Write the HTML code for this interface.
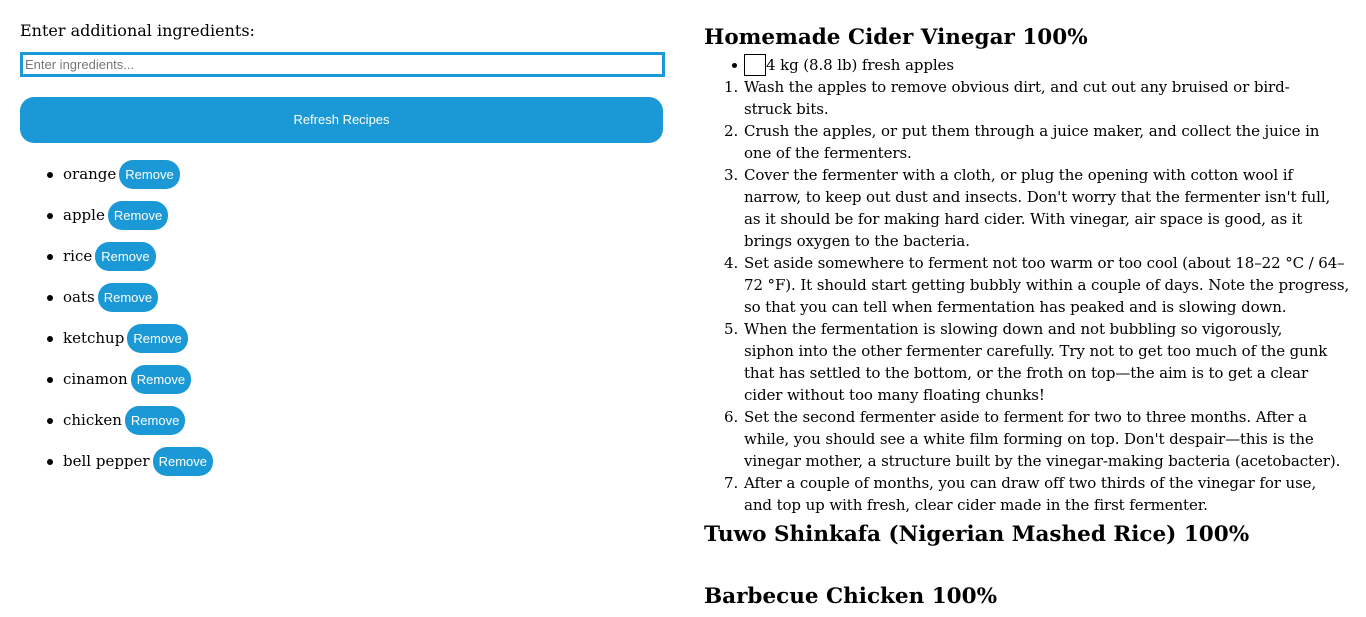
<!DOCTYPE html>
<html><head><style>
body{margin:0;width:1366px;height:617px;overflow:hidden;background:#fff;font-family:"DejaVu Serif","Liberation Serif",serif;color:#000;font-size:15px;}
.left{position:absolute;left:20px;top:0;width:643px;}
.lbl{position:absolute;top:21px;left:0;font-size:16px;white-space:nowrap}
.inp{position:absolute;top:52px;left:0;width:637px;height:19px;border:3px solid #1a99d6;font-family:"Liberation Sans",sans-serif;font-size:13px;color:#777;line-height:19px;padding-left:2px}
.btn{position:absolute;top:97px;left:0;width:643px;height:46px;border-radius:14px;background:#1a99d6;color:#fff;font-family:"Liberation Sans",sans-serif;font-size:13px;text-align:center;line-height:46px}
.item{position:absolute;left:43px;height:30px;line-height:30px;white-space:nowrap}
.item::before{content:"";position:absolute;left:-16px;top:13px;width:6px;height:6px;border-radius:50%;background:#000}
.rm{display:inline-block;vertical-align:middle;background:#1a99d6;color:#fff;font-family:"Liberation Sans",sans-serif;font-size:13px;height:29px;line-height:29px;padding:0 6px;border-radius:14px;margin-left:3px;margin-top:-1px}
.right{position:absolute;left:704px;top:0;width:650px;white-space:nowrap}
h2{position:absolute;left:0;margin:0;font-size:21.5px;font-weight:bold;white-space:nowrap}
.ln{position:absolute;left:40px;line-height:22px;letter-spacing:-0.1px}
.num{position:absolute;left:20px;line-height:22px}
</style></head><body>
<div class="left">
<div class="lbl">Enter additional ingredients:</div>
<div class="inp">Enter ingredients...</div>
<div class="btn">Refresh Recipes</div>
<div class="item" style="top:159px">orange<span class="rm">Remove</span></div>
<div class="item" style="top:200px">apple<span class="rm">Remove</span></div>
<div class="item" style="top:241px">rice<span class="rm">Remove</span></div>
<div class="item" style="top:282px">oats<span class="rm">Remove</span></div>
<div class="item" style="top:323px">ketchup<span class="rm">Remove</span></div>
<div class="item" style="top:364px">cinamon<span class="rm">Remove</span></div>
<div class="item" style="top:405px">chicken<span class="rm">Remove</span></div>
<div class="item" style="top:446px">bell pepper<span class="rm">Remove</span></div>
</div>
<div class="right">
<h2 style="top:25px">Homemade Cider Vinegar 100%</h2>
<div style="position:absolute;left:28px;top:63px;width:5px;height:5px;border-radius:50%;background:#000"></div>
<div style="position:absolute;left:40px;top:54px;width:20px;height:20px;border:1px solid #000"></div>
<div class="ln" style="top:54px;left:62px">4 kg (8.8 lb) fresh apples</div>
<div class="num" style="top:76px">1.</div>
<div class="ln" style="top:76px">Wash the apples to remove obvious dirt, and cut out any bruised or bird-<br>struck bits.</div>
<div class="num" style="top:120px">2.</div>
<div class="ln" style="top:120px">Crush the apples, or put them through a juice maker, and collect the juice in<br>one of the fermenters.</div>
<div class="num" style="top:164px">3.</div>
<div class="ln" style="top:164px">Cover the fermenter with a cloth, or plug the opening with cotton wool if<br>narrow, to keep out dust and insects. Don't worry that the fermenter isn't full,<br>as it should be for making hard cider. With vinegar, air space is good, as it<br>brings oxygen to the bacteria.</div>
<div class="num" style="top:252px">4.</div>
<div class="ln" style="top:252px">Set aside somewhere to ferment not too warm or too cool (about 18–22 °C / 64–<br>72 °F). It should start getting bubbly within a couple of days. Note the progress,<br>so that you can tell when fermentation has peaked and is slowing down.</div>
<div class="num" style="top:318px">5.</div>
<div class="ln" style="top:318px">When the fermentation is slowing down and not bubbling so vigorously,<br>siphon into the other fermenter carefully. Try not to get too much of the gunk<br>that has settled to the bottom, or the froth on top—the aim is to get a clear<br>cider without too many floating chunks!</div>
<div class="num" style="top:406px">6.</div>
<div class="ln" style="top:406px">Set the second fermenter aside to ferment for two to three months. After a<br>while, you should see a white film forming on top. Don't despair—this is the<br>vinegar mother, a structure built by the vinegar-making bacteria (acetobacter).</div>
<div class="num" style="top:472px">7.</div>
<div class="ln" style="top:472px">After a couple of months, you can draw off two thirds of the vinegar for use,<br>and top up with fresh, clear cider made in the first fermenter.</div>
<h2 style="top:522px">Tuwo Shinkafa (Nigerian Mashed Rice) 100%</h2>
<h2 style="top:584px">Barbecue Chicken 100%</h2>
</div>
</body></html>
